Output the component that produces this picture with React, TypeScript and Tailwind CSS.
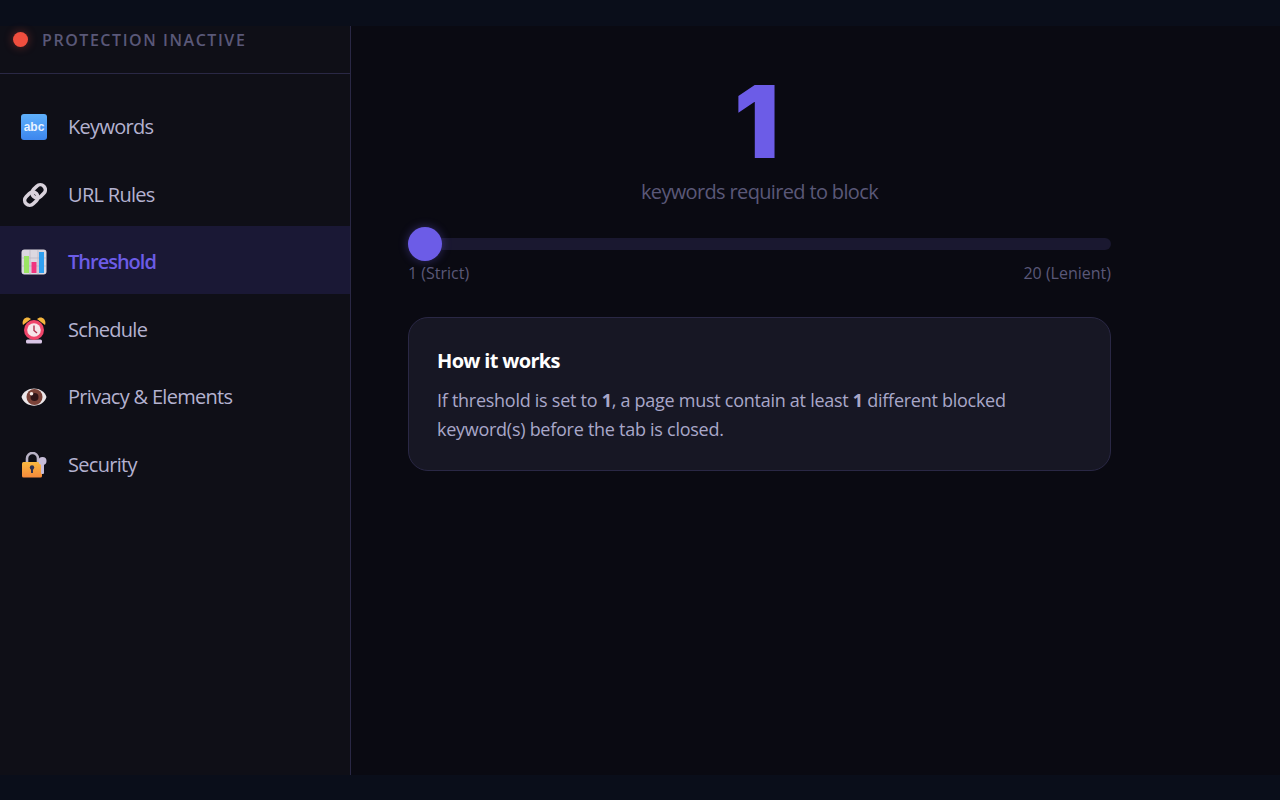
const sans = "font-['Open_Sans',sans-serif]"

function AbcIcon() {
  return (
    <div className="w-[26px] h-[26px] rounded-[3px] bg-gradient-to-b from-[#5fb0fb] to-[#3d86ee] flex items-center justify-center">
      <span className="font-['Liberation_Sans',sans-serif] font-bold text-[12px] leading-none text-[#e8f2ff]">abc</span>
    </div>
  )
}

function LinkIcon() {
  return (
    <svg width="26" height="26" viewBox="0 0 26 26" fill="none">
      <g transform="translate(1 0) rotate(-45 13 13)" stroke="#d9d2dc" strokeWidth="3.6">
        <rect x="0.5" y="8" width="14.5" height="10" rx="5" />
        <rect x="11" y="8" width="14.5" height="10" rx="5" />
      </g>
    </svg>
  )
}

function ChartIcon() {
  return (
    <svg width="26" height="26" viewBox="0 0 26 26">
      <rect x="0.5" y="0.5" width="25" height="25" rx="3" fill="#dcd8e0" />
      <path d="M9 1v24M17 1v24M1 9h24M1 17h24" stroke="#b9b5c0" strokeWidth="0.7" />
      <rect x="3" y="7" width="5" height="17" fill="#9be564" />
      <rect x="10.5" y="13" width="5" height="11" fill="#f0357f" />
      <rect x="18" y="3" width="5" height="21" fill="#2f9ff0" />
    </svg>
  )
}

function ClockIcon() {
  return (
    <svg width="26" height="28" viewBox="0 0 26 28">
      <path d="M2 9 C0 3 6 -1 10 3 Z" fill="#f5b53d" />
      <path d="M24 9 C26 3 20 -1 16 3 Z" fill="#f5b53d" />
      <rect x="5" y="23.5" width="16" height="4" rx="1.5" fill="#d9c6e6" />
      <circle cx="13" cy="14" r="10" fill="#f0456a" />
      <circle cx="13" cy="14" r="6.8" fill="#f6e6ea" />
      <path d="M13 9.5v5l3 2.5" stroke="#b0324f" strokeWidth="1.4" fill="none" />
    </svg>
  )
}

function EyeIcon() {
  return (
    <svg width="26" height="26" viewBox="0 0 26 26">
      <path d="M0.5 13 C4 1.5 22 1.5 25.5 13 C22 24.5 4 24.5 0.5 13 Z" fill="#ece7ea" />
      <circle cx="13.5" cy="13" r="8" fill="#7a4238" />
      <circle cx="13.5" cy="13" r="4" fill="#2e1518" />
      <circle cx="10.5" cy="9.8" r="1.8" fill="#f3e8e4" />
    </svg>
  )
}

function LockIcon() {
  return (
    <svg width="26" height="26" viewBox="0 0 26 26">
      <defs>
        <linearGradient id="lock" x1="0" y1="0" x2="0" y2="1">
          <stop offset="0" stopColor="#fbb93f" />
          <stop offset="1" stopColor="#f58a3c" />
        </linearGradient>
      </defs>
      <path d="M6 11V6.5a5.5 5.5 0 0 1 11 0V11" stroke="#b9b3c6" strokeWidth="2.6" fill="none" />
      <rect x="1" y="10" width="20" height="15.5" rx="1.5" fill="url(#lock)" />
      <circle cx="11" cy="15.5" r="2.2" fill="#2f3150" />
      <rect x="10" y="16" width="2" height="5" fill="#2f3150" />
      <rect x="20" y="11" width="3" height="11" rx="1" fill="#c6bcd8" />
      <circle cx="21.5" cy="9" r="4" fill="#c6bcd8" />
    </svg>
  )
}

const navItems = [
  { label: 'Keywords', icon: <AbcIcon /> },
  { label: 'URL Rules', icon: <LinkIcon /> },
  { label: 'Threshold', icon: <ChartIcon />, active: true },
  { label: 'Schedule', icon: <ClockIcon /> },
  { label: 'Privacy & Elements', icon: <EyeIcon /> },
  { label: 'Security', icon: <LockIcon /> },
]

export default function App() {
  return (
    <div className={`h-screen w-full flex flex-col overflow-hidden bg-[#0a0e1a] ${sans}`}>
      <div className="h-[26px] shrink-0" />
      <div className="flex-1 min-h-0 flex bg-[#0a0a12]">
        {/* Sidebar */}
        <aside className="w-[351px] shrink-0 bg-[#0f0f17] border-r border-[#2a2845]">
          <div className="h-[48px] flex items-start pl-[13px] gap-[14px] border-b border-[#2a2845]">
            <div className="w-[15px] h-[15px] mt-[6px] rounded-full bg-[#f04e3e] shadow-[0_0_10px_rgba(240,78,62,0.4)]" />
            <span className="text-[16px] leading-[28px] font-semibold tracking-[1.55px] text-[#5a5878]">PROTECTION INACTIVE</span>
          </div>
          <nav className="pt-[17px]">
            {navItems.map((item) => (
              <div
                key={item.label}
                className={`h-[67.5px] pt-[5px] flex items-center pl-[21px] gap-[21px] ${item.active ? 'bg-[#1a1835]' : ''}`}
              >
                <div className="w-[26px] h-[26px] shrink-0 flex items-center justify-center">{item.icon}</div>
                <span className={`text-[20px] ${item.active ? 'text-[#6c5ce7] font-semibold tracking-[-1px]' : 'text-[#b4b2d0] tracking-[-0.7px]'}`}>{item.label}</span>
              </div>
            ))}
          </nav>
        </aside>

        {/* Threshold panel */}
        <main className="flex-1 pl-[57px]">
          <div className="w-[703px]">
            <div className="flex flex-col items-center">
              <div className="h-[128px] pt-[46px] mr-[6px] font-['Inter',sans-serif] font-black text-[100px] leading-[100px] text-[#6c5ce7]">1</div>
              <div className="mt-[24px] text-[20px] leading-[28px] tracking-[-0.65px] text-[#5a5878]">keywords required to block</div>
            </div>
            <div className="relative mt-[32px] h-[12px] rounded-full bg-[#1a1830]">
              <div className="absolute left-[-0.5px] top-[-11px] w-[34px] h-[34px] rounded-full bg-[#6c5ce7] shadow-[0_0_10px_rgba(108,92,231,0.4)]" />
            </div>
            <div className="mt-[12px] flex justify-between text-[16px] leading-[22px] text-[#5a5878]">
              <span>1 (Strict)</span>
              <span>20 (Lenient)</span>
            </div>
            <div className="mt-[33px] h-[154px] rounded-[20px] border border-[#2a2845] bg-[#171724] px-[28px] pt-[29px]">
              <h3 className="text-[20px] leading-[28px] font-bold tracking-[-0.67px] text-white">How it works</h3>
              <p className="mt-[11px] text-[18px] leading-[29px] tracking-[-0.27px] text-[#a9a7c9]">
                If threshold is set to <strong>1</strong>, a page must contain at least <strong>1</strong> different blocked keyword(s) before the tab is closed.
              </p>
            </div>
          </div>
        </main>
      </div>
      <div className="h-[25px] shrink-0" />
    </div>
  )
}
